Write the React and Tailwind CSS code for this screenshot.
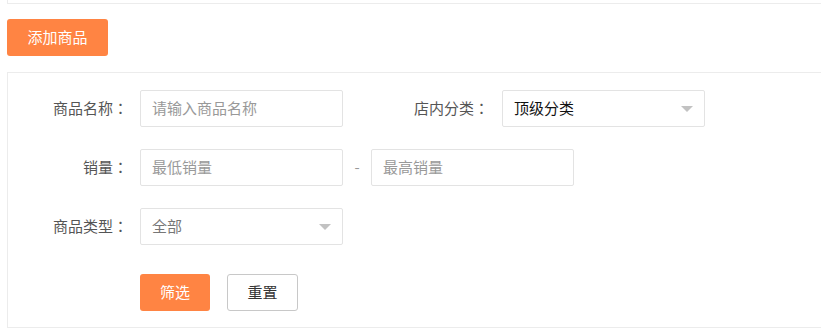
export default function App() {
  const Arrow = () => (
    <svg width="12" height="6" viewBox="0 0 12 6" className="shrink-0">
      <path d="M0 0 L12 0 L6 6 Z" fill="#c2c2c2" />
    </svg>
  );
  const Colon = () => <span className="font-['Noto_Sans_CJK_JP',sans-serif]">：</span>;
  return (
    <div className="w-[821px] h-[334px] overflow-hidden bg-white text-[15px] font-['Noto_Sans_CJK_SC',sans-serif]">
      <div className="ml-[7px] h-[4px] border-l border-b border-[#ececec]" />
      <div className="pt-[15px] pl-[7px]">
        <button className="w-[101px] h-[37px] rounded-[3px] bg-[#ff8443] text-white flex items-center justify-center">
          添加商品
        </button>
      </div>
      <div className="mt-[16px] ml-[7px] border-l border-t border-b border-[#ececec] pt-[17px] pb-[16px]">
        <div className="flex items-center h-[37px]">
          <div className="w-[120px] text-right text-[#555]">商品名称<Colon /></div>
          <div className="ml-[12px] w-[203px] h-[37px] border border-[#e3e3e3] rounded-[2px] pl-[11px] flex items-center text-[#999]">
            请输入商品名称
          </div>
          <div className="w-[146px] text-right text-[#555]">店内分类<Colon /></div>
          <div className="ml-[13px] w-[203px] h-[37px] border border-[#e3e3e3] rounded-[2px] pl-[11px] pr-[11px] flex items-center justify-between text-[#111]">
            <span>顶级分类</span>
            <Arrow />
          </div>
        </div>
        <div className="flex items-center h-[37px] mt-[22px]">
          <div className="w-[120px] text-right text-[#555]">销量<Colon /></div>
          <div className="ml-[12px] w-[203px] h-[37px] border border-[#e3e3e3] rounded-[2px] pl-[11px] flex items-center text-[#999]">
            最低销量
          </div>
          <div className="w-[28px] text-center text-[#999]">-</div>
          <div className="w-[203px] h-[37px] border border-[#e3e3e3] rounded-[2px] pl-[11px] flex items-center text-[#999]">
            最高销量
          </div>
        </div>
        <div className="flex items-center h-[37px] mt-[22px]">
          <div className="w-[120px] text-right text-[#555]">商品类型<Colon /></div>
          <div className="ml-[12px] w-[203px] h-[37px] border border-[#e3e3e3] rounded-[2px] pl-[11px] pr-[11px] flex items-center justify-between text-[#777]">
            <span>全部</span>
            <Arrow />
          </div>
        </div>
        <div className="flex items-center mt-[29px] pl-[132px] gap-[17px]">
          <button className="w-[70px] h-[37px] rounded-[3px] bg-[#ff8443] text-white flex items-center justify-center">
            筛选
          </button>
          <button className="w-[71px] h-[37px] rounded-[3px] border border-[#c8c8c8] bg-white text-[#333] flex items-center justify-center">
            重置
          </button>
        </div>
      </div>
    </div>
  );
}
